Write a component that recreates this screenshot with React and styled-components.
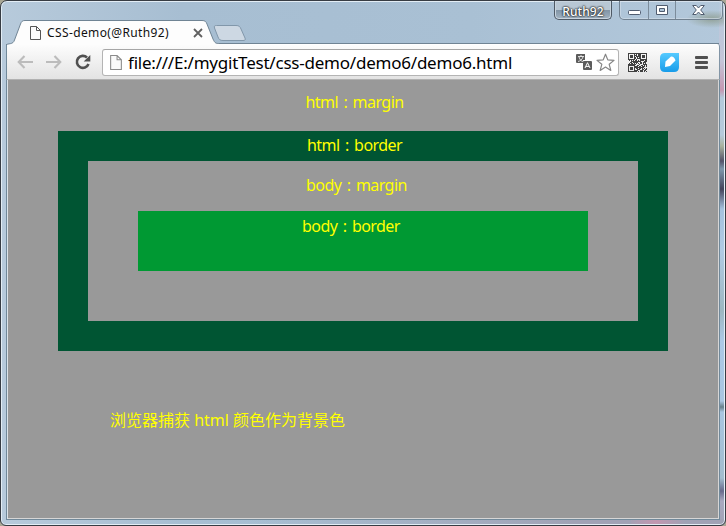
import React from "react";
import styled, { createGlobalStyle } from "styled-components";

const Global = createGlobalStyle`
  * { box-sizing: border-box; }
  html, body { margin: 0; height: 100%; overflow: hidden; }
  body { background: #a9a795; font-family: "Noto Sans", "Noto Sans CJK SC", sans-serif; }
  svg { display: block; flex: none; }
`;

const Frame = styled.div`
  width: 726px;
  height: 526px;
  display: flex;
  flex-direction: column;
  border: 1px solid #373c43;
  border-radius: 7px 7px 6px 6px;
  box-shadow: inset 0 0 0 1px #e3edf5;
  padding: 0 6px 5px 5px;
  background:
    radial-gradient(ellipse 26px 9px at 711px 18px, #83907aaa, #a6bdd000),
    linear-gradient(90deg, #a6bdd000, #a0a2b5 85%) 250px 518px / 380px 6px no-repeat,
    linear-gradient(90deg, #a0a2b5, #c297b0 30%, #a0a2b5 60%) 625px 518px / 99px 6px no-repeat,
    linear-gradient(#b5c9dc 0, #c5c5d8 60px, #c598b2 89px, #b4cadb 97px, #b6cadb 134px, #a9b29e 145px, #54536a 160px, #7e98ac 168px, #44445c 188px, #a5c2de 208px, #b1cbe4 250px, #9db7c1 310px, #acc9e6 340px, #a9c6e1 400px, #68818b 406px, #a9c6e1 411px, #a2bdce 477px, #696a8c 490px, #aaa9c0 500px, #a0a2b5 100%) 718px 0 / 7px 100% no-repeat,
    linear-gradient(90deg, #b7cadb 0, #a7bed2 25%, #a9c0d4 65%, #b3c8db 100%);
`;

const TitleBar = styled.header`
  height: 43px;
  flex: none;
  display: flex;
  justify-content: space-between;
  margin-right: -4px;
  background: linear-gradient(#708494, #708494) 6px 100% / calc(100% - 10px) 1px no-repeat;
`;

const TabStrip = styled.div`
  display: flex;
  position: relative;
  width: 246px;
  padding: 19px 0 0 24px;
`;

const TabShape = styled.svg`
  position: absolute;
  left: 0;
  top: 19px;
`;

const TabContent = styled.div`
  position: relative;
  z-index: 1;
  display: flex;
  align-items: center;
  width: 173px;
  height: 25px;
`;

const TabTitle = styled.span`
  flex: 1;
  margin-left: 6px;
  font: 12px/18px "Noto Sans", sans-serif;
  letter-spacing: 0.38px;
  color: #101010;
  white-space: nowrap;
`;

const WindowControls = styled.div`
  display: flex;
  align-items: flex-start;
  gap: 7px;
`;

const UserBadge = styled.div`
  width: 58px;
  height: 19px;
  border: 1px solid #4e5965;
  border-top: 0;
  border-radius: 0 0 5px 5px;
  box-shadow: inset 0 0 0 1px #c9d5df;
  background: linear-gradient(#b8c7d4 0 48%, #8295a6 52%, #a2b3c2);
  color: #fff;
  font: 500 12px/21px "Noto Sans", sans-serif;
  letter-spacing: 0.1px;
  text-align: center;
  text-shadow: 0 0 2px #222, 0 0 2px #222, 0 0 1px #333;
`;

const ButtonGroup = styled.div`
  display: flex;
  height: 19px;
  width: 104px;
  border: 1px solid #718190;
  border-top: 0;
  border-radius: 0 0 5px 5px;
  box-shadow: inset 0 0 0 1px #d0dde8aa;
`;

const CaptionButton = styled.button`
  width: ${(p) => p.$width}px;
  padding: 0 ${(p) => p.$shift || 0}px 0 0;
  border: 0;
  border-left: ${(p) => (p.$divided ? "1px solid #7c8c9b" : "0")};
  background: none;
  display: flex;
  align-items: center;
  justify-content: center;
`;

const Toolbar = styled.nav`
  height: 36px;
  flex: none;
  display: flex;
  align-items: center;
  margin: 0 -1px 0 0;
  padding: 1px 10px 0 10px;
  border: 1px solid #8295a6;
  border-left-color: #71899a;
  border-bottom: 1px solid #b1b1b1;
  border-top: 0;
  border-radius: 0 3px 0 0;
  background: linear-gradient(#fdfdfd, #e3e3e3);
  box-shadow: inset 0 1px #fff;
`;

const NavButton = styled.button`
  width: 29px;
  height: 24px;
  padding: 0;
  border: 0;
  background: none;
  display: flex;
  align-items: center;
`;

const AddressBar = styled.div`
  width: 517px;
  height: 27px;
  margin-left: -2px;
  padding: 0 3px 0 7px;
  display: flex;
  align-items: center;
  background: #fff;
  border: 1px solid #b4b4b4;
  border-top-color: #a6a6a6;
  border-radius: 3px;
`;

const Url = styled.span`
  flex: 1;
  margin-left: 6px;
  padding-top: 1px;
  font: 17px/24px "Noto Sans", sans-serif;
  letter-spacing: -0.22px;
  color: #000;
  white-space: nowrap;
`;

const Extensions = styled.div`
  display: flex;
  align-items: center;
  margin-left: 9px;
`;

const Spacer = styled.span`
  width: ${(p) => p.$w}px;
`;

const Page = styled.main`
  flex: 1;
  min-height: 0;
  margin-right: -1px;
  border: 1px solid #71899a;
  border-width: 0 1px 1px;
  background: #999;
  box-shadow: inset 1px 0 #dce3e9, inset -1px -1px #d6d6d6;
  padding: 0 51px 0 51px;
`;

const Label = styled.div`
  height: ${(p) => p.$height}px;
  padding: ${(p) => p.$top}px 0 0 ${(p) => p.$left}px;
  color: #ff0;
  font: 16px/20px "Noto Sans", "Noto Sans CJK SC", sans-serif;
  letter-spacing: ${(p) => p.$spacing || 0}px;
  word-spacing: ${(p) => p.$wordSpacing || 0}px;
  white-space: nowrap;
`;

const HtmlBorder = styled.section`
  width: 610px;
  height: 220px;
  padding: 0 30px 30px;
  background: #053;
`;

const BodyMargin = styled.section`
  height: 160px;
  padding: 0 50px;
  background: #999;
`;

const BodyBorder = styled.section`
  height: 60px;
  background: #093;
`;

const DocIcon = ({ w = 11, h = 14, color = "#555" }) => (
  <svg width={w} height={h} viewBox="0 0 11 14" fill="#fafafa" stroke={color}>
    <path d="M.5.5H6.5L10.5 4.5V13.5H.5ZM6.5.5V4.5H10.5" />
  </svg>
);

const QrIcon = () => {
  const cells = [];
  const finder = (x, y) => {
    const local = [[0, 0], [12, 0], [0, 12]].find(([a, b]) => x >= a && x < a + 7 && y >= b && y < b + 7);
    if (!local) return null;
    const d = Math.max(Math.abs(x - local[0] - 3), Math.abs(y - local[1] - 3));
    return d !== 2;
  };
  for (let y = 0; y < 19; y++)
    for (let x = 0; x < 19; x++) {
      const f = finder(x, y);
      if (f === null ? (x * 17 + y * 29 + x * y * 7 + ((x ^ y) * 5)) % 11 < 7 : f)
        cells.push(<path key={`${x}-${y}`} d={`M${x} ${y}h1v1h-1z`} />);
    }
  return <svg width="19" height="19" fill="#404040">{cells}</svg>;
};

const ArrowIcon = ({ flip }) => (
  <svg width="16" height="14" viewBox="0 0 16 14" fill="none" stroke="#bcbcbc" strokeWidth="2.1">
    <path d={flip ? "M0 7H14M8.5 1L14.3 7L8.5 13" : "M16 7H2M7.5 1L1.7 7L7.5 13"} />
  </svg>
);

export default function App() {
  return (
    <>
      <Global />
      <Frame>
        <TitleBar>
          <TabStrip>
            <TabShape width="244" height="25" viewBox="0 0 244 25">
              <path d="M1 24.5C5 23.5 7 24 8.5 20L14.5 4C15.5 1.4 16.5.5 19 .5H196C199 .5 200 1.5 201 4L207 19C209 23.5 210 23.5 214 23.5H244V25H1Z" fill="#fdfdfd" />
              <path d="M0 25C2 23 7 25 8.5 20L14.5 4C15.5 1.4 16.5.5 19 .5H196C199 .5 200 1.5 201 4L207 19C209 23.5 210 23.5 214 23.5H244" fill="none" stroke="#708494" />
              <path d="M210.5 5.5H230C233 5.5 234 6.5 235 9L239 18C239.8 20 239 20.5 237 20.5H217C214 20.5 213 19.5 212 17L208.5 8C208 6 208.5 5.5 210.5 5.5Z" fill="#cdd8e3" stroke="#8197aa" />
            </TabShape>
            <TabContent>
              <DocIcon />
              <TabTitle>CSS-demo(@Ruth92)</TabTitle>
              <svg width="10" height="10" stroke="#606060" strokeWidth="1.8"><path d="M1 1L9 9M9 1L1 9" /></svg>
            </TabContent>
          </TabStrip>
          <WindowControls>
            <UserBadge>Ruth92</UserBadge>
            <ButtonGroup>
              <CaptionButton $width={28}>
                <svg width="13" height="14"><rect x=".5" y="7.5" width="12" height="4" rx="1" fill="#fff" stroke="#515d70" /></svg>
              </CaptionButton>
              <CaptionButton $width={27} $divided>
                <svg width="12" height="11"><path fillRule="evenodd" d="M.5.5h11v9H.5zM3.5 3.5v3h5v-3z" fill="#fff" stroke="#515d70" /></svg>
              </CaptionButton>
              <CaptionButton $width={47} $divided $shift={2}>
                <svg width="13" height="11"><path d="M.7.5H4.3L6.5 3 8.7.5H12.3L8.7 5 12.3 9.5H8.7L6.5 7 4.3 9.5H.7L4.3 5Z" fill="#fff" stroke="#515d70" /></svg>
              </CaptionButton>
            </ButtonGroup>
          </WindowControls>
        </TitleBar>
        <Toolbar>
          <NavButton aria-label="Back"><ArrowIcon /></NavButton>
          <NavButton aria-label="Forward"><ArrowIcon flip /></NavButton>
          <NavButton aria-label="Reload">
            <svg width="16" height="16" viewBox="0 0 16 16"><path d="M13.5 10A6 6 0 1 1 12 3.5" fill="none" stroke="#505050" strokeWidth="2.6" /><path d="M15.3 1V7.5H8.7Z" fill="#505050" /></svg>
          </NavButton>
          <AddressBar>
            <DocIcon w={12} h={15} color="#8b8b8b" />
            <Url>file:///E:/mygitTest/css-demo/demo6/demo6.html</Url>
            <svg width="16" height="17" viewBox="0 0 16 17">
              <path d="M1 0H9V6H7V9H1Q0 9 0 8V1Q0 0 1 0Z" fill="#5c5c5c" />
              <path d="M2 2.5H8M5 1V2.5M3 3C4 6 5 7 7 7.5M7 3C6 6 4 7 2 7.5" stroke="#fff" fill="none" strokeWidth=".8" />
              <rect x="7" y="7" width="9" height="9" rx="1" fill="#5c5c5c" />
              <path d="M9 14L11.5 8.7L14 14M10 12.4H13" stroke="#fff" fill="none" />
            </svg>
            <Spacer $w={4} />
            <svg width="19" height="19" viewBox="0 0 19 19"><path d="M9.5 1.2L11.8 6.9 18 7.4 13.2 11.3 14.8 17.4 9.5 14.1 4.2 17.4 5.8 11.3 1 7.4 7.2 6.9Z" fill="#fff" stroke="#858585" strokeWidth="1.2" strokeLinejoin="round" /></svg>
          </AddressBar>
          <Extensions>
            <QrIcon />
            <Spacer $w={13} />
            <svg width="19" height="19" viewBox="0 0 19 19">
              <defs><linearGradient id="blue" x2="0" y2="1"><stop stopColor="#55caff" /><stop offset="1" stopColor="#189ce9" /></linearGradient></defs>
              <path d="M5 0H19V14Q19 19 14 19H5Q0 19 0 14V5Q0 0 5 0Z" fill="url(#blue)" />
              <path d="M5 14L5.5 8.5L11 3.5Q14 3 15.5 7.5L10 13Z" fill="#fff" />
            </svg>
            <Spacer $w={16} />
            <svg width="13" height="13" fill="#505050"><rect width="13" height="3" rx="1" /><rect y="5" width="13" height="3" rx="1" /><rect y="10" width="13" height="3" rx="1" /></svg>
          </Extensions>
        </Toolbar>
        <Page>
          <Label $height={51} $top={12} $left={247.5} $spacing={-0.55} $wordSpacing={1.8}>html : margin</Label>
          <HtmlBorder>
            <Label $height={30} $top={4} $left={219} $spacing={-0.55} $wordSpacing={1.8}>html : border</Label>
            <BodyMargin>
              <Label $height={50} $top={14} $left={168} $spacing={-0.55} $wordSpacing={1.8}>body : margin</Label>
              <BodyBorder>
                <Label $height={60} $top={5} $left={164} $spacing={-0.55} $wordSpacing={1.8}>body : border</Label>
              </BodyBorder>
            </BodyMargin>
          </HtmlBorder>
          <Label $height={80} $top={59} $left={52}>浏览器捕获 html 颜色作为背景色</Label>
        </Page>
      </Frame>
    </>
  );
}
